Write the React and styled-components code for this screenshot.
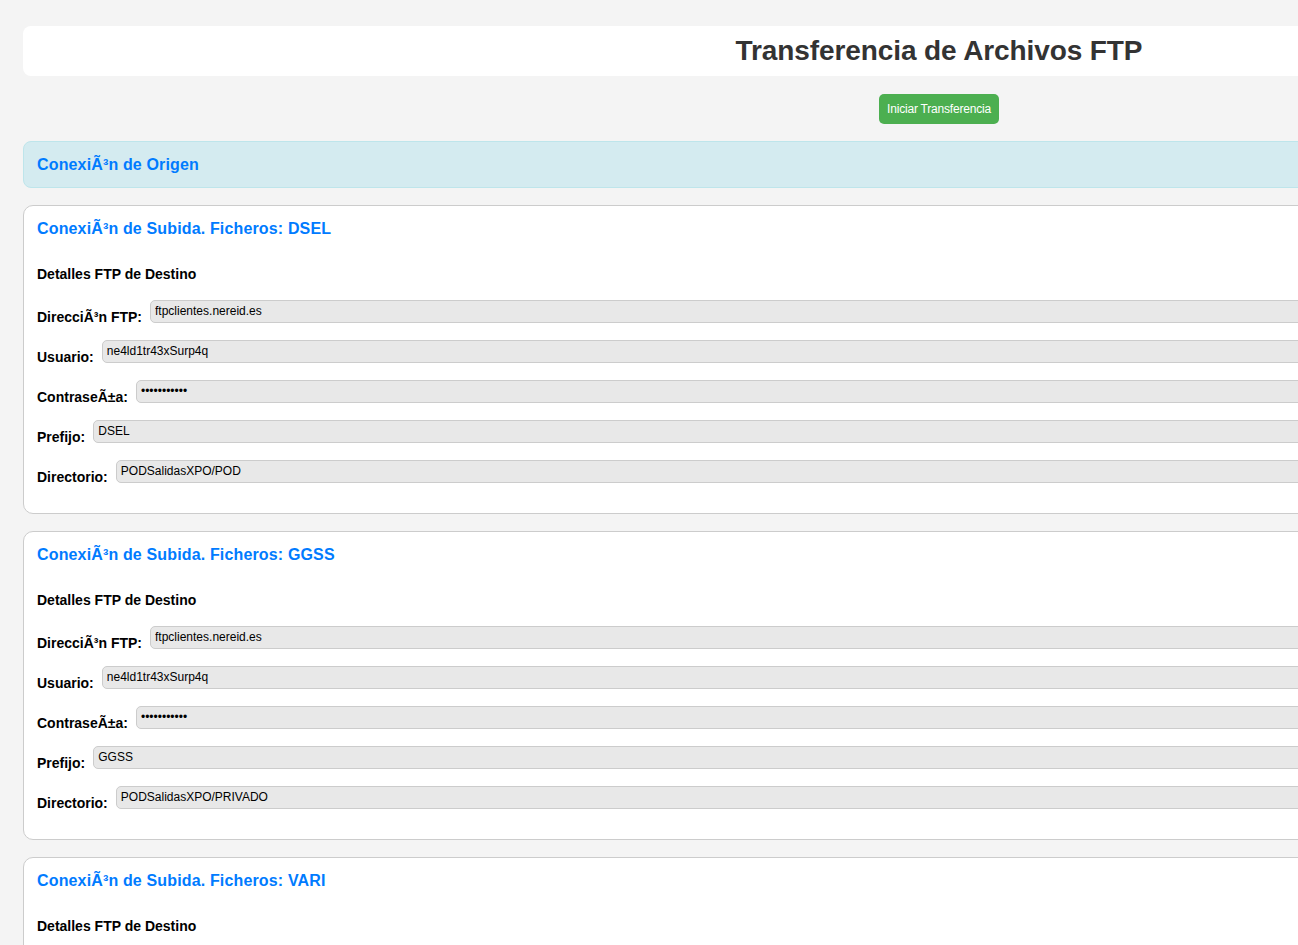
import React from 'react';
import styled, { createGlobalStyle } from 'styled-components';

const GlobalStyle = createGlobalStyle`
  body {
    margin: 0;
    background: #f4f4f4;
    font-family: "Liberation Sans", Arial, sans-serif;
    color: #000;
  }
`;

const Page = styled.div`
  width: 1832px;
  padding: 26px 0 40px 23px;
  display: flex;
  flex-direction: column;
`;

const Header = styled.header`
  height: 50px;
  background: #fff;
  border-radius: 8px;
  display: flex;
  align-items: center;
  justify-content: center;
`;

const Title = styled.h1`
  margin: 0;
  font-size: 28px;
  font-weight: bold;
  color: #333;
  line-height: 32px;
  letter-spacing: -0.1px;
`;

const ButtonRow = styled.div`
  display: flex;
  justify-content: center;
  margin: 18px 0 17px;
`;

const StartButton = styled.button`
  height: 30px;
  padding: 0 8px;
  background: #4caf50;
  color: #fff;
  border: none;
  border-radius: 5px;
  font-family: "Liberation Sans", Arial, sans-serif;
  font-size: 12px;
  font-weight: normal;
  letter-spacing: -0.2px;
  cursor: pointer;
`;

const OriginBox = styled.div`
  height: 47px;
  box-sizing: border-box;
  background: #d4ebf0;
  border: 1px solid #bee5eb;
  border-radius: 8px;
  padding: 1px 13px 0;
  display: flex;
  align-items: center;
  margin-bottom: 17px;
`;

const SectionTitle = styled.h3`
  margin: 0;
  font-size: 16px;
  line-height: 18px;
  font-weight: bold;
  color: #007bff;
  letter-spacing: 0.15px;
`;

const Card = styled.section`
  background: #fff;
  border: 1px solid #ccc;
  border-radius: 10px;
  padding: 14px 13px 30px;
  margin-bottom: 17px;
  display: flex;
  flex-direction: column;
`;

const SubTitle = styled.h4`
  margin: 28px 0 18px;
  font-size: 14px;
  line-height: 16px;
  font-weight: bold;
`;

const Fields = styled.div`
  display: flex;
  flex-direction: column;
  gap: 17px;
`;

const Row = styled.div`
  display: flex;
  align-items: flex-end;
  gap: 8px;
`;

const Label = styled.label`
  font-size: 14px;
  line-height: 16px;
  font-weight: bold;
  white-space: nowrap;
  margin-bottom: -2px;
`;

const Input = styled.input`
  flex: 1;
  box-sizing: border-box;
  height: 23px;
  padding: 0 5px 1px 4px;
  background: #e8e8e8;
  border: 1px solid #ccc;
  border-radius: 5px;
  font-family: "Liberation Sans", Arial, sans-serif;
  font-size: 12px;
  color: #000;
  outline: none;
`;

const uploads = [
  { files: 'DSEL', dir: 'PODSalidasXPO/POD' },
  { files: 'GGSS', dir: 'PODSalidasXPO/PRIVADO' },
  { files: 'VARI', dir: 'PODSalidasXPO/VARIOS' },
];

const Field = ({ label, value, type = 'text' }) => (
  <Row>
    <Label>{label}</Label>
    <Input type={type} value={value} readOnly />
  </Row>
);

export default function App() {
  return (
    <>
      <GlobalStyle />
      <Page>
        <Header>
          <Title>Transferencia de Archivos FTP</Title>
        </Header>
        <ButtonRow>
          <StartButton>Iniciar Transferencia</StartButton>
        </ButtonRow>
        <OriginBox>
          <SectionTitle>ConexiÃ³n de Origen</SectionTitle>
        </OriginBox>
        {uploads.map((u) => (
          <Card key={u.files}>
            <SectionTitle>ConexiÃ³n de Subida. Ficheros: {u.files}</SectionTitle>
            <SubTitle>Detalles FTP de Destino</SubTitle>
            <Fields>
              <Field label="DirecciÃ³n FTP:" value="ftpclientes.nereid.es" />
              <Field label="Usuario:" value="ne4ld1tr43xSurp4q" />
              <Field label="ContraseÃ±a:" value="xxxxxxxxxxx" type="password" />
              <Field label="Prefijo:" value={u.files} />
              <Field label="Directorio:" value={u.dir} />
            </Fields>
          </Card>
        ))}
      </Page>
    </>
  );
}
